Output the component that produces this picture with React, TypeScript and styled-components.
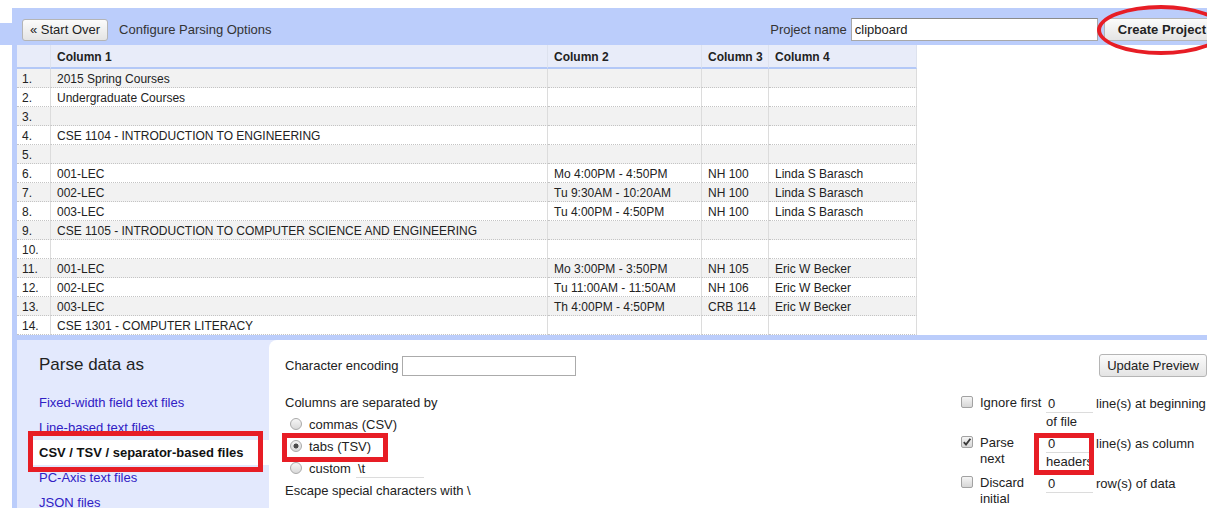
import React from "react";
import styled, { createGlobalStyle } from "styled-components";

const FONT = `"Liberation Sans", Arial, sans-serif`;
const BAND = "#bbcdfb";
const PANEL = "#e3e9fd";

const GlobalStyle = createGlobalStyle`
  html, body { margin: 0; padding: 0; background: #fff; }
  body { font-family: ${FONT}; font-size: 13px; color: #222; overflow: hidden; }
  * { box-sizing: border-box; }
`;

const Page = styled.div`
  position: relative;
  width: 1207px;
  height: 508px;
  overflow: hidden;
  padding-top: 8px;
  padding-left: 12px;
`;

const HeaderBar = styled.header`
  position: relative;
  height: 37px;
  background: ${BAND};
  display: flex;
  align-items: center;
  padding: 6px 0 0 10px;
  &::before {
    content: "";
    position: absolute;
    left: -12px;
    top: 15px;
    width: 12px;
    height: 22px;
    background: ${BAND};
  }
`;

const Button = styled.button<{ $primary?: boolean; $tall?: boolean }>`
  height: ${(p) => (p.$tall ? 23 : 22)}px;
  padding: 0 ${(p) => (p.$primary ? 12 : 7)}px;
  font-family: ${FONT};
  font-size: 13px;
  font-weight: ${(p) => (p.$primary ? "bold" : "normal")};
  color: #222;
  background: linear-gradient(#fbfbfb, #e4e4e4);
  border: 1px solid #b5b5b5;
  border-radius: 3px;
  white-space: nowrap;
  flex-shrink: 0;
`;

const HeaderTitle = styled.span`
  margin-left: 11px;
  color: #333;
  font-size: 13px;
`;

const Spacer = styled.div`
  flex: 1;
`;

const FieldLabel = styled.span`
  color: #333;
  font-size: 13px;
  white-space: nowrap;
`;

const NameInput = styled.input`
  width: 247px;
  height: 23px;
  margin-left: 4px;
  padding: 0 3px;
  font-family: ${FONT};
  font-size: 13px;
  color: #222;
  border: 1px solid #a8a8a8;
  border-top-color: #8a8a8a;
  background: #fff;
  outline: none;
`;

const CreateButton = styled(Button)`
  margin-left: 6px;
  margin-right: -14px;
  padding: 0 14px 0 13px;
`;

const Workspace = styled.div`
  height: 463px;
  background: ${BAND};
  padding-left: 5px;
  display: flex;
  flex-direction: column;
  gap: 5px;
`;

const DataArea = styled.div`
  height: 290px;
  flex-shrink: 0;
  background: #fff;
  overflow: hidden;
`;

const Table = styled.table`
  border-collapse: separate;
  border-spacing: 0;
  table-layout: fixed;
  width: 900px;
  font-size: 12px;
  color: #222;
`;

const HeadCell = styled.th<{ $index?: boolean }>`
  height: 24px;
  padding: 2px 0 0 ${(p) => (p.$index ? 5 : 6)}px;
  text-align: left;
  font-weight: bold;
  background: #e8ecf9;
  border-right: 1px solid #dde2ee;
  border-bottom: 2px solid #b3c8f7;
  white-space: nowrap;
`;

const Row = styled.tr<{ $odd: boolean }>`
  background: ${(p) => (p.$odd ? "#f2f2f2" : "#fff")};
`;

const Cell = styled.td<{ $index?: boolean }>`
  height: 19px;
  padding: 2px 0 0 ${(p) => (p.$index ? 5 : 6)}px;
  line-height: 16px;
  border-right: 1px solid #dcdcdc;
  border-bottom: 1px dotted #c4c4c4;
  white-space: nowrap;
  overflow: hidden;
`;

const Controls = styled.div`
  flex: 1;
  display: flex;
  background: ${PANEL};
`;

const FormatPanel = styled.nav`
  width: 252px;
  flex-shrink: 0;
  padding-top: 15px;
`;

const PanelTitle = styled.h2`
  margin: 0 0 15px 22px;
  font-size: 17px;
  font-weight: normal;
  line-height: 20px;
  color: #222;
`;

const FormatLink = styled.a<{ $selected?: boolean }>`
  display: block;
  height: 25px;
  line-height: 25px;
  font-size: 13px;
  white-space: nowrap;
  text-decoration: none;
  margin-left: ${(p) => (p.$selected ? 16 : 22)}px;
  padding-left: ${(p) => (p.$selected ? 6 : 0)}px;
  color: ${(p) => (p.$selected ? "#111" : "#3020c4")};
  font-weight: ${(p) => (p.$selected ? "bold" : "normal")};
  background: ${(p) => (p.$selected ? "#fff" : "transparent")};
`;

const OptionsPanel = styled.section`
  flex: 1;
  background: #fff;
  border-top-left-radius: 8px;
  padding: 14px 0 0 16px;
  display: flex;
  flex-direction: column;
`;

const TopRow = styled.div`
  display: flex;
  align-items: center;
  justify-content: space-between;
  height: 23px;
`;

const EncodingGroup = styled.div`
  display: flex;
  align-items: center;
  gap: 4px;
`;

const BoxInput = styled.input`
  width: 174px;
  height: 20px;
  margin-top: 1px;
  border: 1px solid #ababab;
  font-family: ${FONT};
  font-size: 13px;
  outline: none;
`;

const OptionsBody = styled.div`
  display: flex;
  margin-top: 17px;
`;

const SeparatorColumn = styled.div`
  flex: 1;
  line-height: 17px;
`;

const Heading = styled.div`
  height: 17px;
  margin-bottom: 2px;
`;

const RadioRow = styled.label`
  display: flex;
  align-items: center;
  height: 22px;
  padding-left: 5px;
  gap: 7px;
  white-space: nowrap;
`;

const Radio = styled.span<{ $checked?: boolean }>`
  width: 12px;
  height: 12px;
  border-radius: 50%;
  border: 1px solid #a9a9a9;
  flex-shrink: 0;
  background: ${(p) =>
    p.$checked
      ? "radial-gradient(circle, #4a4a4a 0 2.2px, transparent 2.8px), linear-gradient(#f3f3f3, #d8d8d8)"
      : "linear-gradient(#f6f6f6, #d9d9d9)"};
`;

const LineInput = styled.span<{ $width: number }>`
  display: inline-block;
  width: ${(p) => p.$width}px;
  height: 18px;
  line-height: 17px;
  padding-left: 2px;
  border-bottom: 1px solid #dcdcdc;
  vertical-align: top;
`;

const CustomInput = styled(LineInput)`
  margin-left: -2px;
  margin-top: 2px;
`;

const EscapeLine = styled.div`
  height: 22px;
  line-height: 23px;
`;

const FlagsColumn = styled.div`
  width: 250px;
  flex-shrink: 0;
  display: grid;
  grid-template-columns: 23px 66px 1fr;
  row-gap: 5px;
  line-height: 17px;
  align-items: start;
  padding-top: 1px;
`;

const CheckCell = styled.div`
  padding: 1px 0 0 4px;
`;

const CheckBox = styled.span`
  display: block;
  width: 12px;
  height: 12px;
  border: 1px solid #a2a2a2;
  border-radius: 2px;
  background: linear-gradient(#f5f5f5, #d6d6d6);
  svg {
    display: block;
  }
`;

const FlagLabel = styled.div`
  white-space: nowrap;
  line-height: 16px;
`;

const FlagValue = styled.div`
  white-space: nowrap;
`;

const Unit = styled.span`
  margin-left: 3px;
`;

const Annotation = styled.div<{ $round?: boolean }>`
  position: absolute;
  border: ${(p) => (p.$round ? 4 : 5)}px solid #e71d25;
  border-radius: ${(p) => (p.$round ? "50%" : "0")};
  pointer-events: none;
`;

const rows: string[][] = [
  ["2015 Spring Courses"],
  ["Undergraduate Courses"],
  [],
  ["CSE 1104 - INTRODUCTION TO ENGINEERING"],
  [],
  ["001-LEC", "Mo 4:00PM - 4:50PM", "NH 100", "Linda S Barasch"],
  ["002-LEC", "Tu 9:30AM - 10:20AM", "NH 100", "Linda S Barasch"],
  ["003-LEC", "Tu 4:00PM - 4:50PM", "NH 100", "Linda S Barasch"],
  ["CSE 1105 - INTRODUCTION TO COMPUTER SCIENCE AND ENGINEERING"],
  [],
  ["001-LEC", "Mo 3:00PM - 3:50PM", "NH 105", "Eric W Becker"],
  ["002-LEC", "Tu 11:00AM - 11:50AM", "NH 106", "Eric W Becker"],
  ["003-LEC", "Th 4:00PM - 4:50PM", "CRB 114", "Eric W Becker"],
  ["CSE 1301 - COMPUTER LITERACY"],
];

const colWidths = [34, 497, 154, 67, 148];

const formats = [
  "Fixed-width field text files",
  "Line-based text files",
  "CSV / TSV / separator-based files",
  "PC-Axis text files",
  "JSON files",
];

const Check = ({ checked }: { checked?: boolean }) => (
  <CheckBox>
    {checked && (
      <svg width="10" height="10" viewBox="0 0 10 10">
        <path d="M1.8 5.2 L4 7.6 L8.4 1.8" fill="none" stroke="#3a3a3a" strokeWidth="1.9" />
      </svg>
    )}
  </CheckBox>
);

export default function App() {
  return (
    <>
      <GlobalStyle />
      <Page>
        <HeaderBar>
          <Button>« Start Over</Button>
          <HeaderTitle>Configure Parsing Options</HeaderTitle>
          <Spacer />
          <FieldLabel>Project name</FieldLabel>
          <NameInput defaultValue="clipboard" />
          <CreateButton $primary $tall>
            Create Project
          </CreateButton>
        </HeaderBar>

        <Workspace>
          <DataArea>
            <Table>
              <colgroup>
                {colWidths.map((w, i) => (
                  <col key={i} style={{ width: w }} />
                ))}
              </colgroup>
              <thead>
                <tr>
                  <HeadCell $index />
                  <HeadCell>Column 1</HeadCell>
                  <HeadCell>Column 2</HeadCell>
                  <HeadCell>Column 3</HeadCell>
                  <HeadCell>Column 4</HeadCell>
                </tr>
              </thead>
              <tbody>
                {rows.map((r, i) => (
                  <Row key={i} $odd={i % 2 === 0}>
                    <Cell $index>{i + 1}.</Cell>
                    {[0, 1, 2, 3].map((c) => (
                      <Cell key={c}>{r[c] ?? ""}</Cell>
                    ))}
                  </Row>
                ))}
              </tbody>
            </Table>
          </DataArea>

          <Controls>
            <FormatPanel>
              <PanelTitle>Parse data as</PanelTitle>
              {formats.map((f) => (
                <FormatLink key={f} href="#" $selected={f.startsWith("CSV")}>
                  {f}
                </FormatLink>
              ))}
            </FormatPanel>

            <OptionsPanel>
              <TopRow>
                <EncodingGroup>
                  <span>Character encoding</span>
                  <BoxInput />
                </EncodingGroup>
                <Button $tall>Update Preview</Button>
              </TopRow>

              <OptionsBody>
                <SeparatorColumn>
                  <Heading>Columns are separated by</Heading>
                  <RadioRow>
                    <Radio />
                    commas (CSV)
                  </RadioRow>
                  <RadioRow>
                    <Radio $checked />
                    tabs (TSV)
                  </RadioRow>
                  <RadioRow>
                    <Radio />
                    custom
                    <CustomInput $width={68}>\t</CustomInput>
                  </RadioRow>
                  <EscapeLine>Escape special characters with \</EscapeLine>
                </SeparatorColumn>

                <FlagsColumn>
                  <CheckCell>
                    <Check />
                  </CheckCell>
                  <FlagLabel>Ignore first</FlagLabel>
                  <FlagValue>
                    <LineInput $width={47}>0</LineInput>
                    <Unit>line(s) at beginning</Unit>
                    <br />
                    of file
                  </FlagValue>

                  <CheckCell>
                    <Check checked />
                  </CheckCell>
                  <FlagLabel>
                    Parse
                    <br />
                    next
                  </FlagLabel>
                  <FlagValue>
                    <LineInput $width={47}>0</LineInput>
                    <Unit>line(s) as column</Unit>
                    <br />
                    headers
                  </FlagValue>

                  <CheckCell>
                    <Check />
                  </CheckCell>
                  <FlagLabel>
                    Discard
                    <br />
                    initial
                  </FlagLabel>
                  <FlagValue>
                    <LineInput $width={47}>0</LineInput>
                    <Unit>row(s) of data</Unit>
                  </FlagValue>
                </FlagsColumn>
              </OptionsBody>
            </OptionsPanel>
          </Controls>
        </Workspace>

        <Annotation $round style={{ left: 1097, top: 5, width: 128, height: 50 }} />
        <Annotation style={{ left: 28, top: 431, width: 235, height: 41 }} />
        <Annotation style={{ left: 282, top: 433, width: 106, height: 29 }} />
        <Annotation style={{ left: 1034, top: 433, width: 60, height: 42 }} />
      </Page>
    </>
  );
}
